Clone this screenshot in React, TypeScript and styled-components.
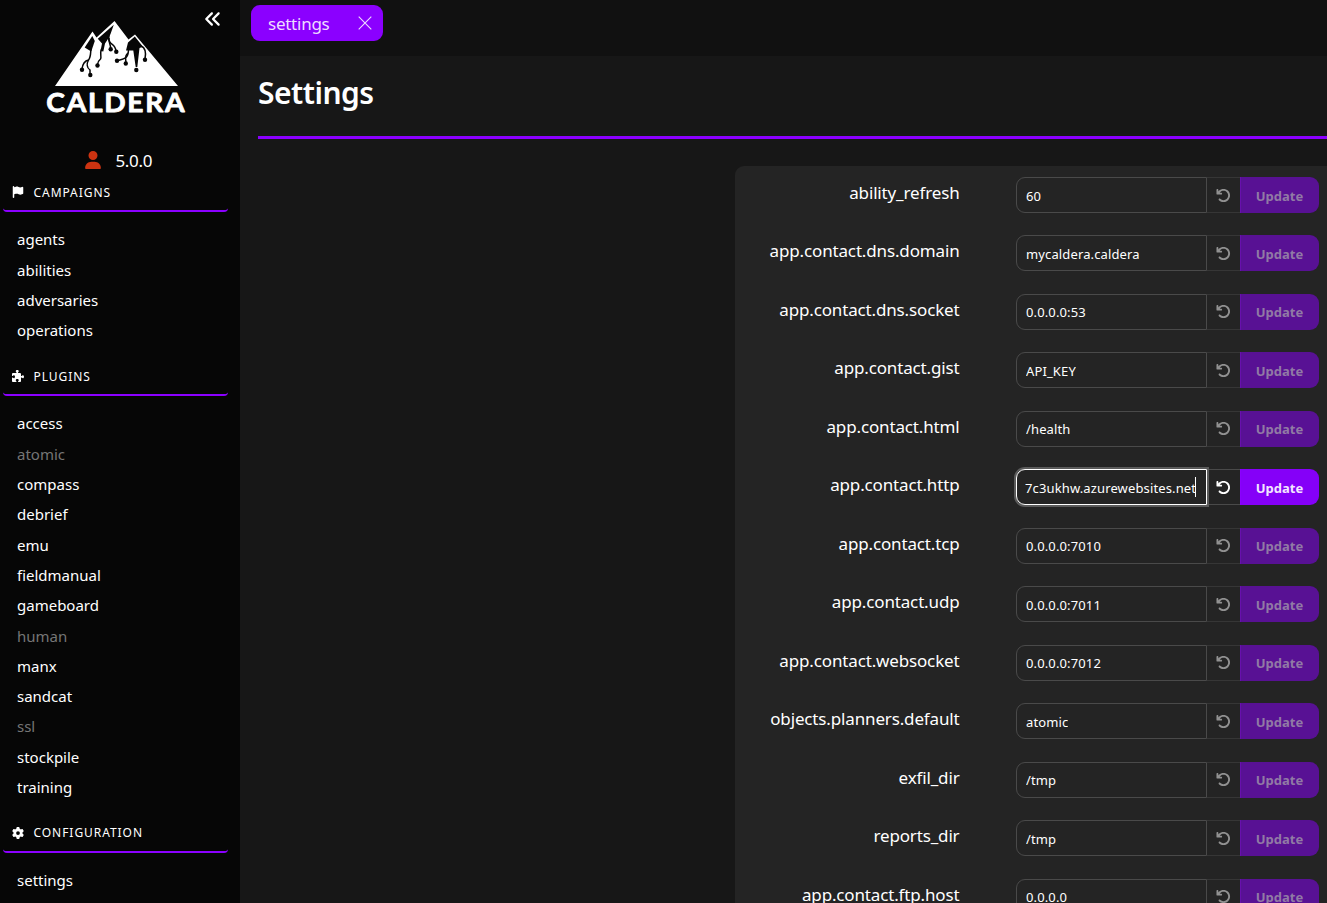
import React from "react";
import styled, { createGlobalStyle, css } from "styled-components";
import {
  FaAnglesLeft,
  FaArrowRotateLeft,
  FaFlag,
  FaGear,
  FaPuzzlePiece,
  FaUser,
} from "react-icons/fa6";

const GlobalStyle = createGlobalStyle`
  * { box-sizing: border-box; }
  body {
    margin: 0;
    height: 903px;
    overflow: hidden;
    background: #171717;
    color: #fff;
    font-family: "Noto Sans", "Open Sans", sans-serif;
  }
`;

const Page = styled.div`
  display: flex;
  width: 100%;
  height: 903px;
  overflow: hidden;
`;

const Sidebar = styled.aside`
  position: relative;
  flex: 0 0 240px;
  height: 903px;
  overflow: hidden;
  background: #060606;
`;

const Collapse = styled.button`
  position: absolute;
  top: 10px;
  right: 18px;
  width: 18px;
  height: 18px;
  padding: 0;
  border: 0;
  background: none;
  color: #fff;
  svg { display: block; width: 18px; height: 18px; }
`;

const Brand = styled.div`
  height: 148px;
  svg { display: block; }
`;

const Version = styled.div`
  display: flex;
  align-items: center;
  height: 24px;
  padding-left: 85px;
  font-size: 17px;
  letter-spacing: -0.35px;
  svg { width: 16px; height: 18px; margin-right: 14.5px; color: #cc3311; }
`;

const SectionTitle = styled.h2`
  display: flex;
  align-items: center;
  width: 225px;
  height: 40px;
  margin: 0 0 0 3px;
  padding: 2.6px 0 0 9px;
  border-bottom: 2px solid #8b00ff;
  border-radius: 4px;
  font-size: 12px;
  font-weight: 400;
  letter-spacing: 0.95px;
  svg { width: 12px; height: 12px; margin-right: 9.5px; }
`;

const Menu = styled.ul`
  list-style: none;
  margin: 0;
  padding: 12.4px 17px 10.3px;
`;

const MenuItem = styled.li<{ $disabled?: boolean }>`
  height: 30.32px;
  line-height: 30.3px;
  font-size: 15px;
  color: ${(p) => (p.$disabled ? "#757575" : "#fff")};
`;

const Main = styled.main`
  flex: 1;
  min-width: 0;
`;

const TabBar = styled.div`
  height: 56px;
  padding: 5px 11px;
  background: #111;
`;

const Tab = styled.div`
  display: flex;
  align-items: center;
  justify-content: space-between;
  width: 132px;
  height: 36px;
  padding: 0 11px 0 17px;
  border-radius: 9px;
  background: #8b00ff;
  color: #eedcff;
  font-size: 17px;
  letter-spacing: -0.25px;
  svg { display: block; }
`;

const Content = styled.section`
  padding-left: 18px;
`;

const Title = styled.h1`
  height: 83px;
  margin: 0;
  padding-top: 15px;
  border-bottom: 3px solid #8b00ff;
  font-size: 30px;
  line-height: 44px;
  font-weight: 600;
  letter-spacing: -0.5px;
`;

const Panel = styled.div`
  display: flex;
  flex-direction: column;
  gap: 22.47px;
  margin: 27px 0 0 477px;
  padding-top: 11px;
  border-radius: 9px 0 0 0;
  background: #242424;
`;

const Row = styled.div`
  display: flex;
  height: 36px;
`;

const Label = styled.label`
  width: 224.5px;
  margin-right: 56.5px;
  text-align: right;
  font-size: 17px;
  line-height: 31.4px;
  letter-spacing: -0.15px;
`;

const Field = styled.div<{ $active?: boolean }>`
  position: relative;
  display: flex;
  align-items: center;
  width: 191px;
  height: 36px;
  padding: 1px 9px 0;
  border: 1px solid #4a4a4a;
  border-radius: 9px 0 0 9px;
  font-size: 13px;
  letter-spacing: 0.13px;
  white-space: nowrap;
  ${(p) =>
    p.$active &&
    css`
      z-index: 1;
      padding-left: 8px;
      border-color: #fff;
      box-shadow: 0 0 0 2px #5b5b5b;
    `}
`;

const Value = styled.span`
  overflow: hidden;
  max-width: 171px;
`;

const Caret = styled.i`
  position: absolute;
  top: 7px;
  right: 10px;
  width: 1px;
  height: 20px;
  background: #fff;
`;

const Reset = styled.button<{ $active?: boolean }>`
  display: flex;
  align-items: center;
  justify-content: center;
  width: 33px;
  height: 36px;
  padding: 0 1px 0 0;
  border: solid ${(p) => (p.$active ? "#4a4a4a" : "#363636")};
  border-width: 1px 0;
  background: none;
  color: ${(p) => (p.$active ? "#fff" : "#919191")};
  svg { width: 15px; height: 15px; }
`;

const Update = styled.button<{ $active?: boolean }>`
  width: 79px;
  height: 36px;
  padding: 1px 1px 0 0;
  border: 0;
  border-left: 1px solid ${(p) => (p.$active ? "#8b00ff" : "#6710ad")};
  border-radius: 0 9px 9px 0;
  background: ${(p) => (p.$active ? "#8500f8" : "#581194")};
  color: ${(p) => (p.$active ? "#f3e6ff" : "#917aa5")};
  font: 700 13px "Noto Sans", sans-serif;
`;

const campaigns = ["agents", "abilities", "adversaries", "operations"];
const plugins = [
  "access", "atomic", "compass", "debrief", "emu", "fieldmanual", "gameboard",
  "human", "manx", "sandcat", "ssl", "stockpile", "training",
];
const disabledPlugins = ["atomic", "human", "ssl"];

const settings: [string, string][] = [
  ["ability_refresh", "60"],
  ["app.contact.dns.domain", "mycaldera.caldera"],
  ["app.contact.dns.socket", "0.0.0.0:53"],
  ["app.contact.gist", "API_KEY"],
  ["app.contact.html", "/health"],
  ["app.contact.http", "7c3ukhw.azurewebsites.net"],
  ["app.contact.tcp", "0.0.0.0:7010"],
  ["app.contact.udp", "0.0.0.0:7011"],
  ["app.contact.websocket", "0.0.0.0:7012"],
  ["objects.planners.default", "atomic"],
  ["exfil_dir", "/tmp"],
  ["reports_dir", "/tmp"],
  ["app.contact.ftp.host", "0.0.0.0"],
];

const nodes = [
  [82, 69.7], [90.3, 75], [97.5, 65.5], [110.7, 49.3], [116.3, 51.8],
  [117, 60.8], [125.8, 63.5], [136.3, 70], [145, 59.7],
];

function Logo() {
  return (
    <svg width="240" height="130" viewBox="0 0 240 130">
      <path
        d="M55 86 L92.5 31.5 L96.5 37.5 L114.5 21 L128.5 39.5 L135 34.5 L178 86 Z"
        fill="#fff"
      />
      <g fill="#060606">
        <path d="M84.7 47.5 L92.3 36 L94.8 41 L91.4 51 L90 50.8 Z" />
        <path d="M97.8 38.8 L113.8 24.7 L110.5 34 L108 39 L105 43.5 L103.3 51.5 L100.5 51 L102 43.5 Z" />
        <path d="M128 42.5 L134.8 36.5 L143 46.8 L139.5 48 L137.3 67 L135.7 67 L133.3 50.5 L126 50.5 Z" />
        {nodes.map(([cx, cy]) => (
          <circle key={cx} cx={cx} cy={cy} r="2.2" />
        ))}
      </g>
      <g fill="none" stroke="#060606" strokeWidth="1.5">
        <path d="M91 48 C90.5 53 91 57 88.5 60 C84 61 82.5 65 82 69" />
        <path d="M88.5 60 C86.3 64 87 68 90 70 V74" />
        <path d="M101.5 49 C99.3 54 102 57 100.5 59 C98 61 98 62 97.5 65" />
        <path d="M109 35 C107.5 40 110.5 44 110.7 48" />
        <path d="M109 38 C108.5 46 115 42 116 51" />
        <path d="M128.5 49 C128.5 59 124 59 117 60.8" />
        <path d="M128 53 C124 56 126 60 126 63" />
        <path d="M141 46 C146 48 146 54 145 59" />
      </g>
      <text
        x="46.3"
        y="112.3"
        textLength="140"
        lengthAdjust="spacingAndGlyphs"
        letterSpacing="1.6"
        fill="#fff"
        stroke="#fff"
        strokeWidth="0.8"
        strokeLinejoin="round"
        fontFamily="Lato, sans-serif"
        fontWeight="700"
        fontSize="26.3"
      >
        CALDERA
      </text>
    </svg>
  );
}

export default function App() {
  return (
    <>
      <GlobalStyle />
      <Page>
        <Sidebar>
          <Collapse aria-label="Collapse"><FaAnglesLeft /></Collapse>
          <Brand><Logo /></Brand>
          <Version><FaUser />5.0.0</Version>
          <SectionTitle><FaFlag />CAMPAIGNS</SectionTitle>
          <Menu>
            {campaigns.map((name) => <MenuItem key={name}>{name}</MenuItem>)}
          </Menu>
          <SectionTitle><FaPuzzlePiece />PLUGINS</SectionTitle>
          <Menu>
            {plugins.map((name) => (
              <MenuItem key={name} $disabled={disabledPlugins.includes(name)}>{name}</MenuItem>
            ))}
          </Menu>
          <SectionTitle><FaGear />CONFIGURATION</SectionTitle>
          <Menu><MenuItem>settings</MenuItem></Menu>
        </Sidebar>
        <Main>
          <TabBar>
            <Tab>
              settings
              <svg width="14" height="14" viewBox="0 0 14 14" stroke="#eedcff" strokeWidth="1.1">
                <path d="M0.7 0.7 L13.3 13.3 M13.3 0.7 L0.7 13.3" />
              </svg>
            </Tab>
          </TabBar>
          <Content>
            <Title>Settings</Title>
            <Panel>
              {settings.map(([key, value]) => {
                const active = key === "app.contact.http";
                return (
                  <Row key={key}>
                    <Label>{key}</Label>
                    <Field $active={active}>
                      <Value>{value}</Value>
                      {active && <Caret />}
                    </Field>
                    <Reset $active={active} aria-label="Reset"><FaArrowRotateLeft /></Reset>
                    <Update $active={active}>Update</Update>
                  </Row>
                );
              })}
            </Panel>
          </Content>
        </Main>
      </Page>
    </>
  );
}
